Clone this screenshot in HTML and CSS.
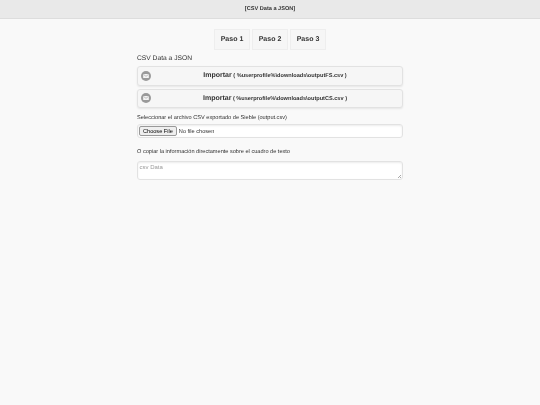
FILE: index.html
```html
<!DOCTYPE html>
<html lang="en">
<head>
  <meta charset="UTF-8" />
  <title>CSV Data a JSON</title>
  <link rel="stylesheet" href="styles.css">
</head>
<body>
  <div class="page">
    <div class="header">[CSV Data a JSON]</div>
    <div class="tabs">
      <a class="tab">Paso 1</a>
      <a class="tab">Paso 2</a>
      <a class="tab">Paso 3</a>
    </div>
    <div class="content">
      <h3>CSV Data a JSON</h3>
      <a class="import">
        <svg class="icon" viewBox="0 0 12 12">
          <circle cx="6" cy="6" r="6" fill="#9a9a9a"/>
          <rect x="2.6" y="3.6" width="6.8" height="4.8" fill="#f4f4f4"/>
          <path d="M2.8 3.9 6 6.4 9.2 3.9" fill="none" stroke="#9a9a9a" stroke-width="0.7"/>
        </svg>
        <span class="big">Importar</span> <span class="small">( %userprofile%\downloads\outputFS.csv )</span>
      </a>
      <a class="import">
        <svg class="icon" viewBox="0 0 12 12">
          <circle cx="6" cy="6" r="6" fill="#9a9a9a"/>
          <rect x="2.6" y="3.6" width="6.8" height="4.8" fill="#f4f4f4"/>
          <path d="M2.8 3.9 6 6.4 9.2 3.9" fill="none" stroke="#9a9a9a" stroke-width="0.7"/>
        </svg>
        <span class="big">Importar</span> <span class="small">( %userprofile%\downloads\outputCS.csv )</span>
      </a>
      <label class="lbl">Seleccionar el archivo CSV exportado de Sieble (output.csv)</label>
      <div class="file-box"><input type="file" class="file" /></div>
      <label class="lbl second">O copiar la información directamente sobre el cuadro de texto</label>
      <textarea class="data" placeholder="csv Data"></textarea>
    </div>
  </div>
</body>
</html>
```

FILE: styles.css
```css
html, body {
  height: 100%;
}
body {
  margin: 0;
  background: #f9f9f9;
  font-family: 'Liberation Sans', Arial, sans-serif;
  color: #333;
  overflow: hidden;
  text-rendering: geometricPrecision;
}
.page {
  will-change: transform;
}
.header {
  height: 18px;
  line-height: 18px;
  background: #e9e9e9;
  border-bottom: 1px solid #ddd;
  text-align: center;
  font-size: 5.6px;
  font-weight: bold;
}
.tabs {
  display: flex;
  justify-content: center;
  gap: 2px;
  margin-top: 10px;
}
.tab {
  width: 34px;
  height: 19px;
  line-height: 19px;
  background: #f6f6f6;
  border: 1px solid #eee;
  text-align: center;
  font-size: 7px;
  font-weight: bold;
}
.content {
  width: 266px;
  margin: 4px auto 0 137px;
}
h3 {
  margin: 0 0 2px;
  font-size: 6.7px;
  line-height: 10px;
  font-weight: normal;
}
.import {
  display: block;
  position: relative;
  box-sizing: border-box;
  height: 19.5px;
  padding-left: 10px;
  line-height: 17.5px;
  margin-bottom: 3px;
  background: #f6f6f6;
  border: 1px solid #e2e2e2;
  border-radius: 3px;
  box-shadow: 0 1px 2px rgba(0, 0, 0, 0.08);
  font-size: 5.6px;
  text-align: center;
}
.icon {
  position: absolute;
  left: 3px;
  top: 3.5px;
  width: 10px;
  height: 10px;
}
.big {
  font-size: 7px;
  font-weight: bold;
}
.small {
  font-size: 5.6px;
  font-weight: bold;
}
.lbl {
  display: block;
  margin-top: 6px;
  font-size: 5.6px;
  line-height: 8px;
}
.second {
  margin-top: 10px;
}
.file-box {
  box-sizing: border-box;
  height: 13.5px;
  margin-top: 2px;
  padding: 1px;
  background: #fff;
  border: 1px solid #e2e2e2;
  border-radius: 3px;
  box-shadow: inset 0 1px 2px rgba(0, 0, 0, 0.08);
}
.file {
  display: block;
  font-family: 'Liberation Sans', Arial, sans-serif;
  font-size: 5.6px;
  color: #333;
}
.file::file-selector-button {
  font-size: 5.6px;
  height: 9.5px;
  padding: 0 3px;
  margin-right: 2px;
  border: 1px solid #999;
  border-radius: 2px;
  background: #efefef;
}
.data {
  display: block;
  box-sizing: border-box;
  width: 266px;
  height: 19px;
  margin-top: 5px;
  padding: 2px 1.5px;
  background: #fff linear-gradient(135deg, transparent 55%, #aaa 55%, #aaa 65%, transparent 65%, transparent 80%, #aaa 80%) right 1px bottom 1px / 4px 4px no-repeat;
  border: 1px solid #e2e2e2;
  border-radius: 3px;
  box-shadow: inset 0 1px 2px rgba(0, 0, 0, 0.08);
  font-family: 'Liberation Sans', Arial, sans-serif;
  font-size: 6px;
  resize: none;
}
.data::placeholder {
  color: #999;
}
```
